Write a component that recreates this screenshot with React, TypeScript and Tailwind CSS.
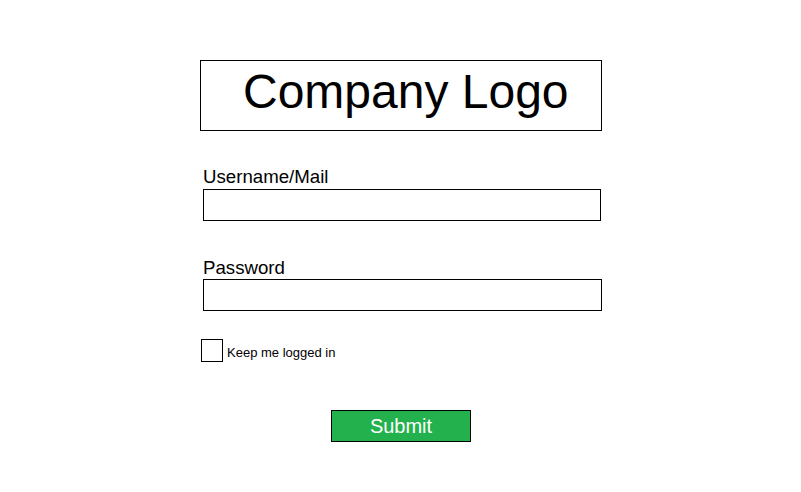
import { useState } from "react";

export default function App() {
  const [keep, setKeep] = useState(false);

  return (
    <div className="min-h-screen w-full bg-white pt-[60px] text-black font-['Liberation_Sans',Arial,sans-serif]">
      <div className="ml-[200px] w-[402px] flex flex-col">
        {/* Logo */}
        <div className="h-[71px] border border-black flex pl-[42px] pt-[7px]">
          <span className="text-[48px] leading-[48px]">Company Logo</span>
        </div>

        {/* Username */}
        <label className="ml-[3px] mt-[35px] text-[18.67px] leading-[21px]">Username/Mail</label>
        <input
          type="text"
          className="ml-[3px] mt-[2px] w-[398px] h-[32px] border border-black outline-none px-1"
        />

        {/* Password */}
        <label className="ml-[3px] mt-[36px] text-[18.67px] leading-[21px]">Password</label>
        <input
          type="password"
          className="ml-[3px] mt-[1px] w-[399px] h-[32px] border border-black outline-none px-1"
        />

        {/* Remember */}
        <div className="ml-px mt-[28px] flex items-end gap-[4px]">
          <input
            type="checkbox"
            checked={keep}
            onChange={(e) => setKeep(e.target.checked)}
            className="appearance-none w-[22px] h-[23px] border border-black bg-white checked:bg-black"
          />
          <span className="text-[13px] leading-[15px] pb-[2px]">Keep me logged in</span>
        </div>

        {/* Submit */}
        <div className="mt-[48px] flex justify-center">
          <button className="w-[140px] h-[32px] border border-black bg-[#22b14c] text-white text-[20px] leading-[23px]">
            Submit
          </button>
        </div>
      </div>
    </div>
  );
}
